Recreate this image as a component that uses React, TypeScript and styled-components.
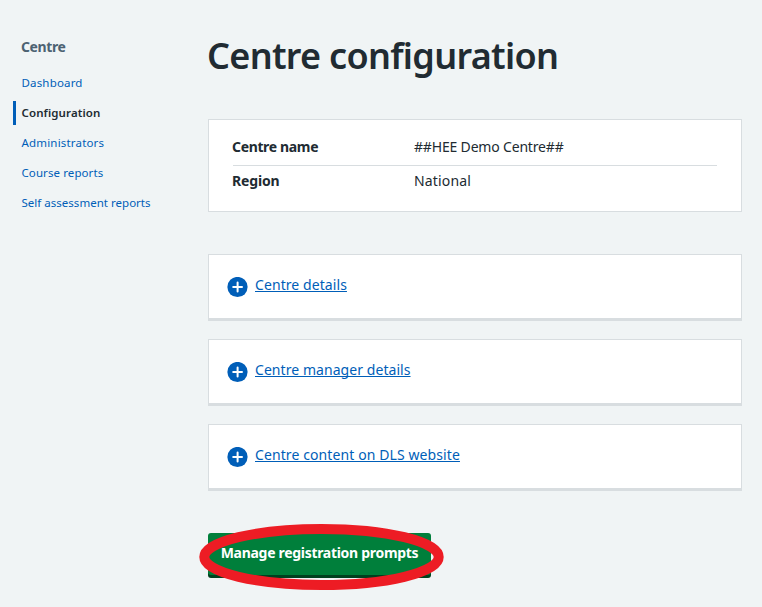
import React from 'react';
import styled, { createGlobalStyle } from 'styled-components';

const GlobalStyle = createGlobalStyle`
  * { box-sizing: border-box; }
  body {
    margin: 0;
    background: #f0f4f5;
    color: #212b32;
    font-family: "Noto Sans", "Open Sans", sans-serif;
    font-size: 14px;
    line-height: 20px;
  }
`;

const Page = styled.div`
  display: flex;
  width: 762px;
  height: 607px;
  overflow: hidden;
`;

const Sidebar = styled.nav`
  width: 208px;
  padding: 37px 0 0 13px;
`;

const SidebarTitle = styled.h2`
  margin: 0 0 14px;
  padding-left: 8px;
  color: #4c6272;
  font-size: 14px;
  font-weight: 700;
  line-height: 20px;
  letter-spacing: -0.4px;
`;

const NavList = styled.ul`
  display: flex;
  flex-direction: column;
  gap: 6px;
  margin: 0;
  padding: 0;
  list-style: none;
`;

const NavItem = styled.li<{ $current?: boolean; $tracking: number }>`
  height: 24px;
  padding-left: 5.5px;
  border-left: 3px solid ${p => (p.$current ? '#005eb8' : 'transparent')};
  color: ${p => (p.$current ? '#212b32' : '#005eb8')};
  font-size: 11.5px;
  font-weight: ${p => (p.$current ? 600 : 400)};
  line-height: 24px;
  letter-spacing: ${p => p.$tracking}px;
`;

const NavLink = styled.a`
  color: inherit;
  text-decoration: none;
`;

const Main = styled.main`
  width: 534px;
  padding-top: 32px;
`;

const Title = styled.h1`
  margin: 0 0 39px;
  font-size: 36px;
  font-weight: 600;
  line-height: 48px;
  letter-spacing: -0.7px;
  text-indent: -1px;
  white-space: nowrap;
`;

const SummaryCard = styled.section`
  height: 93px;
  margin-bottom: 42px;
  padding: 11px 24px 0;
  background: #fff;
  border: 1px solid #d8dde0;
`;

const SummaryList = styled.dl`
  margin: 0;
`;

const SummaryRow = styled.div`
  display: grid;
  grid-template-columns: 181px 1fr;
  height: 34px;
  padding-top: 5px;

  &:not(:last-child) {
    height: 35px;
    padding-top: 6px;
    border-bottom: 1px solid #d8dde0;
  }
`;

const SummaryKey = styled.dt<{ $tracking: number }>`
  margin-left: -1px;
  font-weight: 700;
  letter-spacing: ${p => p.$tracking}px;
`;

const SummaryValue = styled.dd<{ $tracking: number }>`
  margin: 0;
  letter-spacing: ${p => p.$tracking}px;
`;

const Expanders = styled.div`
  display: flex;
  flex-direction: column;
  gap: 18px;
`;

const Expander = styled.section`
  display: flex;
  align-items: flex-start;
  gap: 7px;
  height: 67px;
  padding: 20px 18px 0;
  background: #fff;
  border: 1px solid #d8dde0;
  border-bottom-width: 3px;
`;

const PlusIcon = styled.svg`
  flex: none;
  width: 21px;
  height: 21px;
  margin-top: 2px;
`;

const ExpanderLink = styled.a<{ $tracking: number }>`
  color: #005eb8;
  letter-spacing: ${p => p.$tracking}px;
  text-decoration: underline;
  text-decoration-thickness: 1px;
  text-decoration-skip-ink: none;
  text-underline-offset: 1px;
`;

const ButtonArea = styled.div`
  position: relative;
  width: 223px;
  margin-top: 42px;
`;

const Button = styled.button`
  display: block;
  width: 223px;
  height: 42px;
  margin: 0;
  padding: 0 0 3px;
  border: 0;
  border-radius: 3px;
  background: #007f3b;
  box-shadow: 0 3px 0 #00401e;
  color: #fff;
  font: 700 14px/20px "Noto Sans", "Open Sans", sans-serif;
  letter-spacing: -0.3px;
  white-space: nowrap;
`;

const Highlight = styled.svg`
  position: absolute;
  left: -10px;
  top: -10px;
  width: 247px;
  height: 68px;
  pointer-events: none;
`;

const navItems = [
  { label: 'Dashboard', tracking: 0.17 },
  { label: 'Configuration', tracking: 0.1, current: true },
  { label: 'Administrators', tracking: 0.18 },
  { label: 'Course reports', tracking: 0.09 },
  { label: 'Self assessment reports', tracking: 0.02 },
];

const sections = [
  { label: 'Centre details', tracking: 0.08 },
  { label: 'Centre manager details', tracking: 0.06 },
  { label: 'Centre content on DLS website', tracking: 0.1 },
];

export default function App() {
  return (
    <>
      <GlobalStyle />
      <Page>
        <Sidebar>
          <SidebarTitle>Centre</SidebarTitle>
          <NavList>
            {navItems.map(item => (
              <NavItem key={item.label} $current={item.current} $tracking={item.tracking}>
                <NavLink href="#">{item.label}</NavLink>
              </NavItem>
            ))}
          </NavList>
        </Sidebar>
        <Main>
          <Title>Centre configuration</Title>
          <SummaryCard>
            <SummaryList>
              <SummaryRow>
                <SummaryKey $tracking={-0.35}>Centre name</SummaryKey>
                <SummaryValue $tracking={-0.18}>##HEE Demo Centre##</SummaryValue>
              </SummaryRow>
              <SummaryRow>
                <SummaryKey $tracking={-0.15}>Region</SummaryKey>
                <SummaryValue $tracking={0.15}>National</SummaryValue>
              </SummaryRow>
            </SummaryList>
          </SummaryCard>
          <Expanders>
            {sections.map(section => (
              <Expander key={section.label}>
                <PlusIcon viewBox="0 0 21 21">
                  <circle cx="10.5" cy="10" r="10.1" fill="#005eb8" />
                  <path d="M6.2 10h8.8M10.6 5.6v8.8" stroke="#fff" strokeWidth="2" strokeLinecap="round" />
                </PlusIcon>
                <ExpanderLink href="#" $tracking={section.tracking}>{section.label}</ExpanderLink>
              </Expander>
            ))}
          </Expanders>
          <ButtonArea>
            <Button type="button">Manage registration prompts</Button>
            <Highlight viewBox="0 0 247 68">
              <ellipse cx="123.5" cy="34" rx="117.2" ry="28" fill="none" stroke="#ed1c24" strokeWidth="10" />
            </Highlight>
          </ButtonArea>
        </Main>
      </Page>
    </>
  );
}
